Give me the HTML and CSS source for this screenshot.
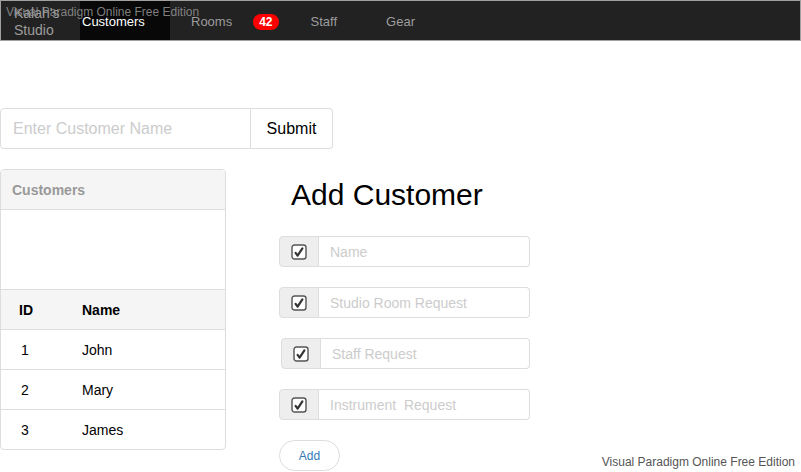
FILE: index.html
```html
<!DOCTYPE html>
<html>
<head>
<meta charset="utf-8">
<link rel="stylesheet" href="styles.css">
</head>
<body>
<nav class="navbar">
  <div class="brand">Kalah's<br>Studio</div>
  <a class="nav-link active">Customers</a>
  <a class="nav-link rooms">Rooms</a>
  <span class="badge">42</span>
  <a class="nav-link staff">Staff</a>
  <a class="nav-link gear">Gear</a>
  <span class="watermark top">Visual Paradigm Online Free Edition</span>
</nav>

<main class="page">
  <form class="search">
    <input class="search-input" type="text" placeholder="Enter Customer Name">
    <button class="search-btn" type="button">Submit</button>
  </form>

  <div class="content">
    <section class="panel">
      <div class="panel-heading">Customers</div>
      <div class="panel-body"></div>
      <table class="table">
        <thead>
          <tr><th class="c-id">ID</th><th>Name</th></tr>
        </thead>
        <tbody>
          <tr><td class="c-id">1</td><td>John</td></tr>
          <tr><td class="c-id">2</td><td>Mary</td></tr>
          <tr><td class="c-id">3</td><td>James</td></tr>
        </tbody>
      </table>
    </section>

    <section class="add">
      <h1 class="add-title">Add Customer</h1>
      <div class="group">
        <span class="addon"><svg viewBox="0 0 16 16" width="16" height="16"><rect x="1" y="1" width="14" height="14" rx="2.5" fill="#fff" stroke="#555" stroke-width="1.4"/><path d="M4.6 8.8 L6.6 11.6 L11.4 4.4" fill="none" stroke="#333" stroke-width="2.2" stroke-linecap="round" stroke-linejoin="round"/></svg></span>
        <input class="group-input" type="text" placeholder="Name">
      </div>
      <div class="group">
        <span class="addon"><svg viewBox="0 0 16 16" width="16" height="16"><rect x="1" y="1" width="14" height="14" rx="2.5" fill="#fff" stroke="#555" stroke-width="1.4"/><path d="M4.6 8.8 L6.6 11.6 L11.4 4.4" fill="none" stroke="#333" stroke-width="2.2" stroke-linecap="round" stroke-linejoin="round"/></svg></span>
        <input class="group-input" type="text" placeholder="Studio Room Request">
      </div>
      <div class="group shifted">
        <span class="addon"><svg viewBox="0 0 16 16" width="16" height="16"><rect x="1" y="1" width="14" height="14" rx="2.5" fill="#fff" stroke="#555" stroke-width="1.4"/><path d="M4.6 8.8 L6.6 11.6 L11.4 4.4" fill="none" stroke="#333" stroke-width="2.2" stroke-linecap="round" stroke-linejoin="round"/></svg></span>
        <input class="group-input" type="text" placeholder="Staff Request">
      </div>
      <div class="group">
        <span class="addon"><svg viewBox="0 0 16 16" width="16" height="16"><rect x="1" y="1" width="14" height="14" rx="2.5" fill="#fff" stroke="#555" stroke-width="1.4"/><path d="M4.6 8.8 L6.6 11.6 L11.4 4.4" fill="none" stroke="#333" stroke-width="2.2" stroke-linecap="round" stroke-linejoin="round"/></svg></span>
        <input class="group-input" type="text" placeholder="Instrument  Request">
      </div>
      <button class="add-btn" type="button">Add</button>
    </section>
  </div>
</main>
<span class="watermark bottom">Visual Paradigm Online Free Edition</span>
</body>
</html>
```

FILE: styles.css
```css
html, body {
  margin: 0;
  padding: 0;
  background: #fff;
  font-family: "Liberation Sans", Arial, sans-serif;
  color: #000;
  width: 801px;
  height: 472px;
  overflow: hidden;
  position: relative;
}

.navbar {
  position: relative;
  display: flex;
  align-items: stretch;
  height: 39px;
  background: #222;
  border: 1px solid #a0a0a0;
  box-sizing: content-box;
}

.brand {
  width: 79px;
  box-sizing: border-box;
  padding: 4px 0 0 13px;
  font-size: 14px;
  line-height: 17px;
  color: #9d9d9d;
}

.nav-link {
  display: flex;
  align-items: center;
  padding-top: 2px;
  font-size: 13px;
  color: #9d9d9d;
  text-decoration: none;
}

.nav-link.active {
  background: #080808;
  color: #fff;
  width: 90px;
  box-sizing: border-box;
  padding-left: 2px;
}

.nav-link.rooms { margin-left: 21px; }

.badge {
  align-self: center;
  margin-left: 21px;
  margin-top: 2px;
  background: #f00;
  color: #fff;
  font-size: 12px;
  font-weight: bold;
  line-height: 16px;
  height: 16px;
  padding: 0 6px;
  border-radius: 8px;
}

.nav-link.staff { margin-left: 32px; }
.nav-link.gear { margin-left: 49px; }

.watermark {
  font-size: 12px;
  color: #555;
  white-space: nowrap;
}

.watermark.top {
  position: absolute;
  left: 5px;
  top: 4px;
  color: rgba(150, 150, 150, 0.85);
}

.watermark.bottom {
  position: absolute;
  right: 6px;
  bottom: 3px;
}

.page {
  padding-top: 67px;
}

.search {
  display: flex;
  margin: 0;
}

.search-input {
  width: 251px;
  height: 41px;
  box-sizing: border-box;
  border: 1px solid #ddd;
  border-radius: 4px 0 0 4px;
  padding: 0 12px;
  font-family: inherit;
  font-size: 16px;
  outline: none;
}

.search-input::placeholder { color: #ccc; }

.search-btn {
  width: 82px;
  height: 41px;
  margin-left: 0;
  border: 1px solid #ddd;
  border-left: none;
  border-radius: 0 4px 4px 0;
  background: #fff;
  font-family: inherit;
  font-size: 16px;
  color: #000;
  padding: 0;
}

.content {
  display: flex;
  margin-top: 20px;
}

.panel {
  width: 226px;
  box-sizing: border-box;
  border: 1px solid #ddd;
  border-radius: 4px;
  overflow: hidden;
  height: 281px;
}

.panel-heading {
  height: 40px;
  box-sizing: border-box;
  background: #f5f5f5;
  border-bottom: 1px solid #ddd;
  padding: 0 11px;
  display: flex;
  align-items: center;
  font-size: 14px;
  font-weight: bold;
  color: #999;
}

.panel-body {
  height: 79px;
}

.table {
  width: 100%;
  border-collapse: collapse;
  font-size: 14px;
}

.table th, .table td {
  height: 40px;
  box-sizing: border-box;
  text-align: left;
  padding: 0;
  border-top: 1px solid #ddd;
}

.table thead th {
  background: #f5f5f5;
  font-weight: bold;
}

.table .c-id {
  width: 81px;
  padding-left: 18px;
  box-sizing: border-box;
}

.table td.c-id { padding-left: 20px; }

.add {
  margin-left: 53px;
  display: flex;
  flex-direction: column;
  align-items: flex-start;
}

.add-title {
  margin: 8px 0 0 12px;
  font-size: 30px;
  font-weight: normal;
  line-height: 36px;
}

.group {
  display: flex;
  width: 251px;
  height: 31px;
  margin-top: 20px;
}

.add-title + .group { margin-top: 23px; }

.group.shifted { margin-left: 2px; width: 249px; }

.addon {
  width: 40px;
  box-sizing: border-box;
  background: #eee;
  border: 1px solid #ddd;
  border-radius: 4px 0 0 4px;
  display: flex;
  align-items: center;
  justify-content: center;
}

.group-input {
  flex: 1;
  min-width: 0;
  box-sizing: border-box;
  border: 1px solid #ddd;
  border-left: none;
  border-radius: 0 4px 4px 0;
  padding: 0 11px;
  font-family: inherit;
  font-size: 14px;
  outline: none;
}

.group-input::placeholder { color: #ccc; }

.add-btn {
  margin-top: 20px;
  width: 61px;
  height: 31px;
  border: 1px solid #ddd;
  border-radius: 16px;
  background: #fff;
  color: #337ab7;
  font-family: inherit;
  font-size: 12px;
  padding: 0;
}
```
